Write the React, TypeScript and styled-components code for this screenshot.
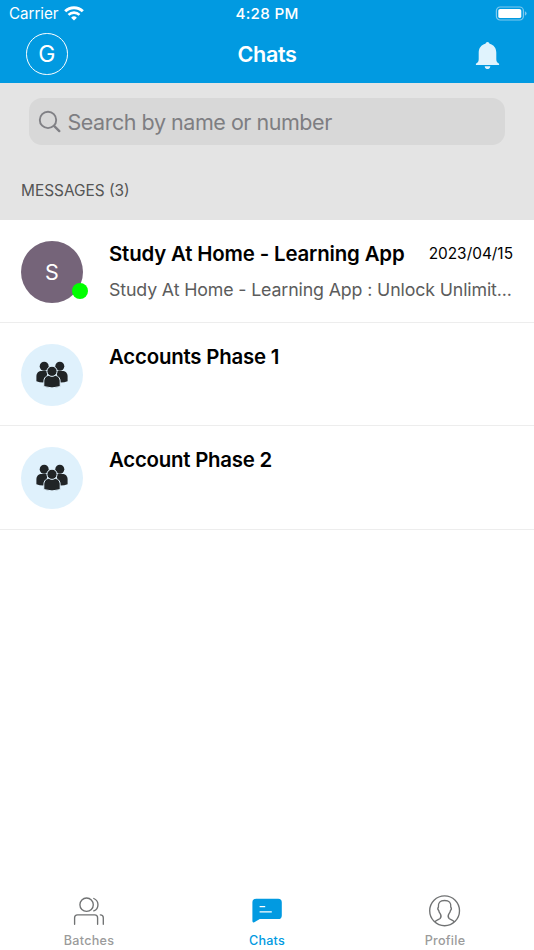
import React from "react";
import styled, { createGlobalStyle } from "styled-components";

const Global = createGlobalStyle`
  * { box-sizing: border-box; }
  html, body { margin: 0; background: #fff; }
  body { font-family: Inter, "Liberation Sans", sans-serif; color: #000; }
`;

interface TextProps {
  $size: number;
  $spacing?: number;
  $weight?: number;
  $color?: string;
}

const Text = styled.span<TextProps>`
  display: block;
  white-space: nowrap;
  font-size: ${(p) => p.$size}px;
  letter-spacing: ${(p) => p.$spacing ?? 0}px;
  font-weight: ${(p) => p.$weight ?? 400};
  color: ${(p) => p.$color ?? "inherit"};
`;

const Screen = styled.div`
  width: 534px;
  height: 950px;
  display: flex;
  flex-direction: column;
  overflow: hidden;
  background: #fff;
`;

const Header = styled.header`
  height: 82.6px;
  flex: none;
  background: #019ae1;
  color: #fff;
`;

const StatusBar = styled.div`
  height: 27px;
  display: grid;
  grid-template-columns: 1fr auto 1fr;
  align-items: center;
  padding: 0 7px 0 9px;
`;

const Clock = styled.div`
  margin-left: -2px;
`;

const Carrier = styled.div`
  display: flex;
  align-items: center;
  gap: 6px;
`;

const BatterySlot = styled.div`
  display: flex;
  justify-content: flex-end;
`;

const NavBar = styled.div`
  height: 54px;
  display: grid;
  grid-template-columns: 1fr auto 1fr;
  align-items: center;
  padding: 0 26px;
`;

const UserInitial = styled.div`
  width: 41.5px;
  height: 41.5px;
  border: 1.4px solid #fff;
  border-radius: 50%;
  display: grid;
  place-items: center;
`;

const BellButton = styled.div`
  display: flex;
  justify-content: flex-end;
  padding: 2px 8px 0 0;
`;

const SearchPanel = styled.section`
  height: 137.2px;
  flex: none;
  background: #e4e4e4;
  padding: 15.7px 29px 0 28.5px;
`;

const SearchField = styled.div`
  height: 46.5px;
  border-radius: 13px;
  background: #d8d8d8;
  display: flex;
  align-items: center;
  gap: 6px;
  padding: 1px 0 0 9px;
`;

const SectionTitle = styled.div`
  margin: 36.4px 0 0 -7.5px;
`;

const Row = styled.article`
  height: 103.25px;
  flex: none;
  display: flex;
  gap: 26px;
  padding: 20.9px 21px 0 21px;
  border-bottom: 1px solid #ededed;
`;

const Avatar = styled.div<{ $bg: string }>`
  position: relative;
  width: 62px;
  height: 62px;
  flex: none;
  border-radius: 50%;
  background: ${(p) => p.$bg};
  color: #fff;
  display: grid;
  place-items: center;
`;

const OnlineDot = styled.span`
  position: absolute;
  right: -5px;
  bottom: 4px;
  width: 16px;
  height: 16px;
  border-radius: 50%;
  background: #0f0;
`;

const RowBody = styled.div`
  flex: 1;
  min-width: 0;
`;

const RowHead = styled.div`
  display: flex;
  align-items: center;
  justify-content: space-between;
  height: 25px;
`;

const Preview = styled.div`
  margin-top: 13.6px;
`;

const TabBar = styled.nav`
  margin-top: auto;
  height: 62px;
  display: grid;
  grid-template-columns: repeat(3, 1fr);
`;

const Tab = styled.div`
  display: flex;
  flex-direction: column;
  align-items: center;
`;

const TabIcon = styled.div`
  height: 44.6px;
  padding-top: 7px;
`;

const WifiIcon = () => (
  <svg width="20" height="15" viewBox="0 0 20 15" fill="none" stroke="#fff">
    <path d="M1.200 5.300a12.600 12.600 0 0 1 17.600 0" strokeWidth="3" />
    <path d="M4.500 8.900a7.900 7.900 0 0 1 11 0" strokeWidth="2.600" />
    <path d="M10 14.600 7.100 11.700a4.200 4.200 0 0 1 5.800 0Z" fill="#fff" stroke="none" />
  </svg>
);

const BatteryIcon = () => (
  <svg width="32" height="16" viewBox="0 0 32 16">
    <rect x="1.400" y="1" width="27" height="13" rx="3.700" fill="none" stroke="#7fc9ef" strokeWidth="1.200" />
    <rect x="3.300" y="2.900" width="23" height="9.200" rx="1.900" fill="#fff" />
    <path d="M29.900 5.200q1.700.700 1.700 2.300t-1.700 2.300Z" fill="#7fc9ef" />
  </svg>
);

const BellIcon = () => (
  <svg width="25" height="28" viewBox="0 0 25 28" fill="#e0f3fd">
    <path d="M10.400 2.700a2.150 2.150 0 0 1 4.200 0c4.200 1.100 6.700 4.400 6.700 8.800v6.500c0 2.200.5 3.300 2.800 4.700v1.400H.9v-1.400C3.200 21.300 3.700 20.200 3.700 18v-6.500c0-4.400 2.500-7.700 6.700-8.800Z" />
    <path d="M9.700 25.300h5.600a2.800 2.800 0 0 1-5.600 0Z" />
  </svg>
);

const SearchIcon = () => (
  <svg width="24" height="24" viewBox="0 0 24 24" fill="none" stroke="#808085" strokeLinecap="round">
    <circle cx="10" cy="9.900" r="8.200" strokeWidth="1.900" />
    <path d="m16.300 16.200 5 4.900" strokeWidth="2.400" />
  </svg>
);

const GroupIcon = () => (
  <svg width="32" height="28" viewBox="0 0 32 28" fill="#202426">
    <circle cx="8.200" cy="5.300" r="4.500" />
    <circle cx="23.800" cy="5.300" r="4.500" />
    <path d="M.4 20.200v-4.600C.4 11.800 2.700 10 5.700 10H11v11.200q-6.300.7-10.600-1Z" />
    <path d="M31.600 20.200v-4.600c0-3.800-2.300-5.600-5.300-5.600H21v11.200q6.300.7 10.600-1Z" />
    <g stroke="#dff1fc" strokeWidth="1">
      <path d="M7.800 25.600v-4.800c0-4.200 2.500-6.400 5.700-6.400h5c3.200 0 5.700 2.200 5.700 6.400v4.800q-8.200 2.600-16.400 0Z" />
      <circle cx="16" cy="10.300" r="5.100" />
    </g>
  </svg>
);

const BatchesIcon = () => (
  <svg width="32" height="31" viewBox="0 -1 32 31" fill="none" stroke="#707273" strokeWidth="1.350" strokeLinecap="round">
    <circle cx="13.600" cy="8.700" r="6.700" />
    <path d="M20.800 2.500a6.700 6.700 0 0 1 0 12.400" />
    <path d="M1.600 28.200v-6.500q0-2.900 2.900-2.900h17.200q2.900 0 2.900 2.900v6.500M27.300 18.800q3 0 3 2.900v6.500" />
  </svg>
);

const ChatIcon = () => (
  <svg width="32" height="31" viewBox="0 -1 32 31">
    <path d="M5 2.800h22.200q3.600 0 3.600 3.600v13q0 3.600-3.600 3.600H8.800L3.300 26.300q-1.900.8-1.900-1.200V6.400q0-3.600 3.600-3.600Z" fill="#019ae1" />
    <path d="M8.600 10.700h5.600M8.600 15.900h12.200" stroke="#fff" strokeWidth="1.250" fill="none" />
  </svg>
);

const ProfileIcon = () => (
  <svg width="32" height="32" viewBox="0 0 32 32" fill="none" stroke="#707273" strokeWidth="1.350">
    <circle cx="15.600" cy="15.800" r="14.900" />
    <path d="M5.800 27c1.500-2 3.900-2.400 5.300-3.600 1.400-1.300.9-3.300.2-4.500-1-1.300-1.500-2-1.600-3.500-.9-.8-.9-2.400-.3-3.200C9 7.600 11 5.500 15.600 5.500s6.600 2.100 6.200 6.700c.6.8.6 2.400-.3 3.200-.1 1.500-.6 2.200-1.600 3.500-.7 1.200-1.200 3.200.2 4.500 1.400 1.200 3.800 1.600 5.300 3.600" />
  </svg>
);

interface Chat {
  name: string;
  spacing: number;
  initial?: string;
  date?: string;
  preview?: string;
}

const chats: Chat[] = [
  {
    name: "Study At Home - Learning App",
    spacing: -0.15,
    initial: "S",
    date: "2023/04/15",
    preview: "Study At Home - Learning App : Unlock Unlimit...",
  },
  { name: "Accounts Phase 1", spacing: -0.2 },
  { name: "Account Phase 2", spacing: -0.23 },
];

const tabs = [
  { label: "Batches", icon: <BatchesIcon />, color: "#9b9b9b" },
  { label: "Chats", icon: <ChatIcon />, color: "#019ae1" },
  { label: "Profile", icon: <ProfileIcon />, color: "#9b9b9b" },
];

const ChatRow = ({ chat }: { chat: Chat }) => (
  <Row>
    <Avatar $bg={chat.initial ? "#756479" : "#dff1fc"}>
      {chat.initial ? <Text $size={21.5}>{chat.initial}</Text> : <GroupIcon />}
      {chat.initial && <OnlineDot />}
    </Avatar>
    <RowBody>
      <RowHead>
        <Text $size={20.4} $weight={600} $spacing={chat.spacing}>{chat.name}</Text>
        {chat.date && <Text $size={15.4} $spacing={0}>{chat.date}</Text>}
      </RowHead>
      {chat.preview && (
        <Preview>
          <Text $size={17.8} $spacing={-0.14} $color="#5c5c5c">{chat.preview}</Text>
        </Preview>
      )}
    </RowBody>
  </Row>
);

export default function App() {
  return (
    <Screen>
      <Global />
      <Header>
        <StatusBar>
          <Carrier>
            <Text $size={15.2} $spacing={-0.05}>Carrier</Text>
            <WifiIcon />
          </Carrier>
          <Clock><Text $size={15.2} $weight={500} $spacing={0.3}>4:28 PM</Text></Clock>
          <BatterySlot><BatteryIcon /></BatterySlot>
        </StatusBar>
        <NavBar>
          <UserInitial><Text $size={23}>G</Text></UserInitial>
          <Text $size={21.6} $weight={600} $spacing={-0.4}>Chats</Text>
          <BellButton><BellIcon /></BellButton>
        </NavBar>
      </Header>
      <SearchPanel>
        <SearchField>
          <SearchIcon />
          <Text $size={21.5} $spacing={-0.47} $color="#7e7e82">Search by name or number</Text>
        </SearchField>
        <SectionTitle>
          <Text $size={15.4} $color="#555">MESSAGES (3)</Text>
        </SectionTitle>
      </SearchPanel>
      {chats.map((chat) => <ChatRow key={chat.name} chat={chat} />)}
      <TabBar>
        {tabs.map((tab) => (
          <Tab key={tab.label}>
            <TabIcon>{tab.icon}</TabIcon>
            <Text $size={12.6} $weight={500} $spacing={0.25} $color={tab.color}>{tab.label}</Text>
          </Tab>
        ))}
      </TabBar>
    </Screen>
  );
}
